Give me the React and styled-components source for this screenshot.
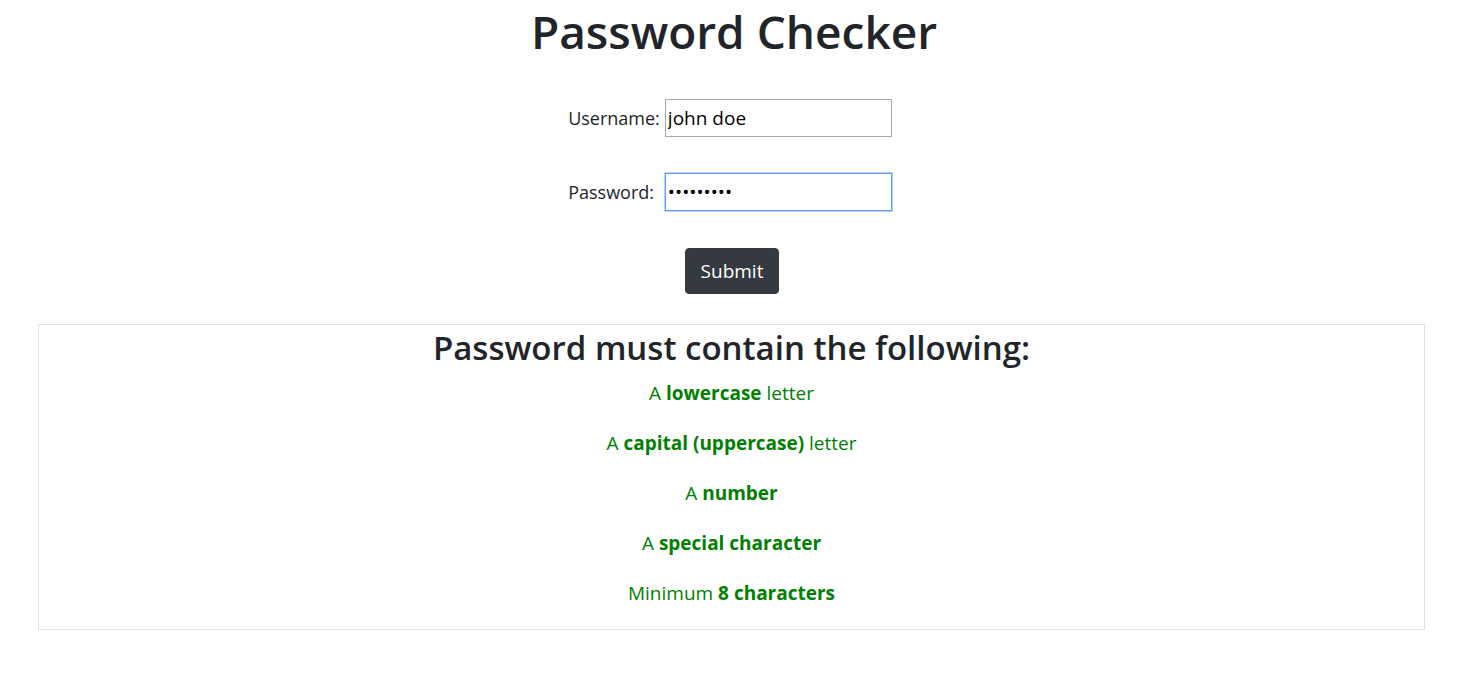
import React from 'react';
import styled, { createGlobalStyle } from 'styled-components';

const GlobalStyle = createGlobalStyle`
    body {
        margin: 0;
        background: #fff;
        color: #212529;
        font-family: 'Open Sans', 'Noto Sans', sans-serif;
    }
`;

const Page = styled.main`
    display: flex;
    flex-direction: column;
`;

const Title = styled.h1`
    margin: 0 0 39px;
    padding-top: 2px;
    font-size: 46px;
    font-weight: 600;
    line-height: 58px;
    text-align: center;
    color: #212529;
`;

const Form = styled.form`
    display: flex;
    flex-direction: column;
    align-items: center;
    gap: 37px;
`;

const Fields = styled.div`
    display: grid;
    grid-template-columns: auto 227px;
    column-gap: 5px;
    row-gap: 36px;
    align-items: center;
    justify-content: center;
    padding-right: 8px;
`;

const Label = styled.label`
    font-size: 18px;
    color: #212529;
`;

const Input = styled.input`
    box-sizing: border-box;
    height: 38px;
    width: 227px;
    padding: 1px 2px;
    border: 1px solid #a9a9a9;
    border-radius: 0;
    font-family: inherit;
    font-size: 19px;
    color: #000;
    outline: none;

    &:focus {
        border: 1px solid #5e9ced;
        box-shadow: 0 0 0 1px #b7d3f7;
    }
`;

const Button = styled.button`
    box-sizing: border-box;
    height: 46px;
    padding: 0 15px;
    margin-right: 4px;
    border: 1px solid #343a40;
    border-radius: 4px;
    background: #343a40;
    color: #fff;
    font-family: inherit;
    font-size: 19px;
    cursor: pointer;
`;

const Rules = styled.section`
    margin: 30px 43px 0 38px;
    border: 1px solid #dee2e6;
    text-align: center;
`;

const RulesTitle = styled.h2`
    margin: 0 0 8px;
    font-size: 33px;
    font-weight: 600;
    line-height: 46px;
`;

const Rule = styled.p`
    margin: 0 0 21px;
    font-size: 19px;
    line-height: 29px;
    color: ${({ met }) => (met ? 'green' : '#dc3545')};

    b {
        font-weight: 700;
    }
`;

const rules = [
    ['A ', 'lowercase', ' letter'],
    ['A ', 'capital (uppercase)', ' letter'],
    ['A ', 'number', ''],
    ['A ', 'special character', ''],
    ['Minimum ', '8 characters', ''],
];

export default function App() {
    return (
        <Page>
            <GlobalStyle />
            <Title>Password Checker</Title>
            <Form onSubmit={(e) => e.preventDefault()}>
                <Fields>
                    <Label htmlFor="username">Username:</Label>
                    <Input id="username" type="text" defaultValue="john doe" />
                    <Label htmlFor="password">Password:</Label>
                    <Input id="password" type="password" defaultValue="Abc1234!x" autoFocus />
                </Fields>
                <Button type="submit">Submit</Button>
            </Form>
            <Rules>
                <RulesTitle>Password must contain the following:</RulesTitle>
                {rules.map(([pre, bold, post]) => (
                    <Rule met key={bold}>
                        {pre}<b>{bold}</b>{post}
                    </Rule>
                ))}
            </Rules>
        </Page>
    );
}
